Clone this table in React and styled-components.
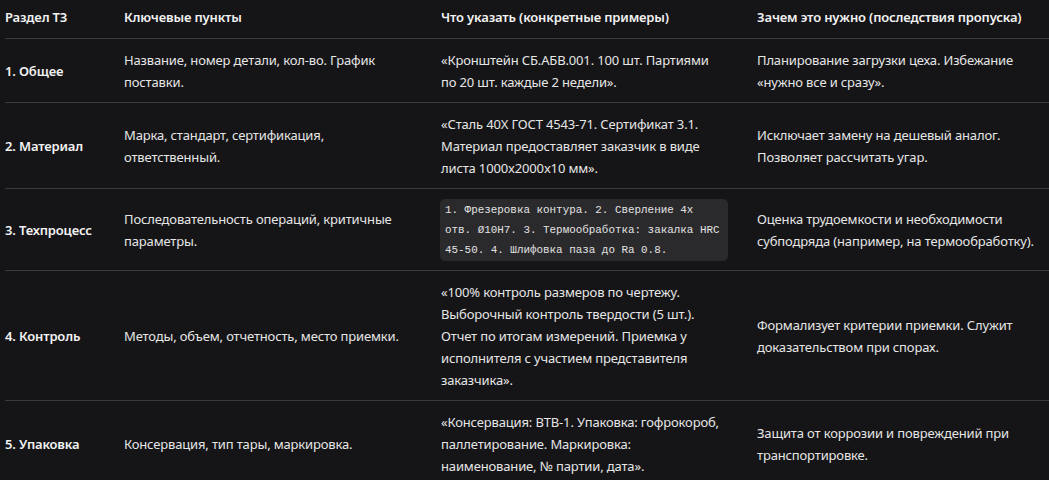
import React from "react";
import styled, { createGlobalStyle } from "styled-components";

const Global = createGlobalStyle`
    html, body { margin:0; padding:0; background:#151517; overflow:hidden; }
    body { font-family:"Noto Sans", "Open Sans", sans-serif; color:#e6e6e6; }
`

// неразрывные пробелы (\u00A0) держат переносы как в оригинале
const rows = [
    {
        part: "1. Общее",
        points: "Название, номер детали, кол-во. График поставки.",
        example: "«Кронштейн СБ.АБВ.001. 100 шт. Партиями по\u00A020\u00A0шт. каждые 2 недели».",
        why: "Планирование загрузки цеха. Избежание «нужно все и сразу».",
    },
    {
        part: "2. Материал",
        points: "Марка, стандарт, сертификация, ответственный.",
        example: "«Сталь 40Х ГОСТ 4543-71. Сертификат 3.1. Материал предоставляет заказчик в виде листа 1000x2000x10 мм».",
        why: "Исключает замену на дешевый аналог. Позволяет рассчитать угар.",
    },
    {
        part: "3. Техпроцесс",
        points: "Последовательность операций, критичные параметры.",
        code: "1. Фрезеровка контура. 2. Сверление 4x отв. Ø10H7. 3. Термообработка: закалка HRC 45-50. 4. Шлифовка паза до Ra 0.8.",
        why: "Оценка трудоемкости и необходимости субподряда (например, на термообработку).",
    },
    {
        part: "4. Контроль",
        points: "Методы, объем, отчетность, место приемки.",
        example: "«100% контроль размеров по чертежу. Выборочный контроль твердости (5 шт.). Отчет по итогам измерений. Приемка у исполнителя с участием представителя заказчика».",
        why: "Формализует критерии приемки. Служит доказательством при спорах.",
    },
    {
        part: "5. Упаковка",
        points: "Консервация, тип тары, маркировка.",
        example: "«Консервация: ВТВ-1. Упаковка: гофрокороб, паллетирование. Маркировка: наименование,\u00A0№\u00A0партии, дата».",
        why: "Защита от коррозии и повреждений при транспортировке.",
    },
]

const Page = styled.div`
    padding:0 0 0 5px;
`
const Table = styled.table`
    border-collapse:collapse;
    table-layout:fixed;
    width:1052px;
    font-size:13px;
    letter-spacing:-0.15px;
    line-height:22px;
`
const Head = styled.th`
    text-align:left;
    font-weight:600;
    color:#f2f2f2;
    padding:6px 8px 10px 16px;
    border-bottom:1px solid #3a3a3c;
    white-space:nowrap;
    &:first-child{ padding-left:0; }
`
const Row = styled.tr`
    border-bottom:1px solid #3a3a3c;
`
const Cell = styled.td`
    padding:10px 8px 9px 16px;
    vertical-align:middle;
    font-weight:${p => p.$bold ? 600 : 400};
    color:${p => p.$bold ? "#f2f2f2" : "#e6e6e6"};
    &:first-child{ padding-left:0; white-space:nowrap; }
`
const Code = styled.code`
    display:block;
    width:288px;
    margin-left:-1px;
    box-sizing:border-box;
    padding:1px 5px;
    background:#2a2a2d;
    border-radius:5px;
    font-family:"Liberation Mono", "DejaVu Sans Mono", monospace;
    font-size:10.9px;
    letter-spacing:0;
    line-height:20px;
    color:#e2e2e2;
`

const App = () => {
    return (
        <Page>
            <Global />
            <Table>
                <colgroup>
                    <col style={{ width: 103 }} />
                    <col style={{ width: 317 }} />
                    <col style={{ width: 316 }} />
                    <col style={{ width: 316 }} />
                </colgroup>
                <thead>
                    <tr>
                        <Head>Раздел ТЗ</Head>
                        <Head>Ключевые пункты</Head>
                        <Head>Что указать (конкретные примеры)</Head>
                        <Head>Зачем это нужно (последствия пропуска)</Head>
                    </tr>
                </thead>
                <tbody>
                    {rows.map(r => (
                        <Row key={r.part}>
                            <Cell $bold>{r.part}</Cell>
                            <Cell>{r.points}</Cell>
                            <Cell>{r.code ? <Code>{r.code}</Code> : r.example}</Cell>
                            <Cell>{r.why}</Cell>
                        </Row>
                    ))}
                </tbody>
            </Table>
        </Page>
    )
}

export default App
